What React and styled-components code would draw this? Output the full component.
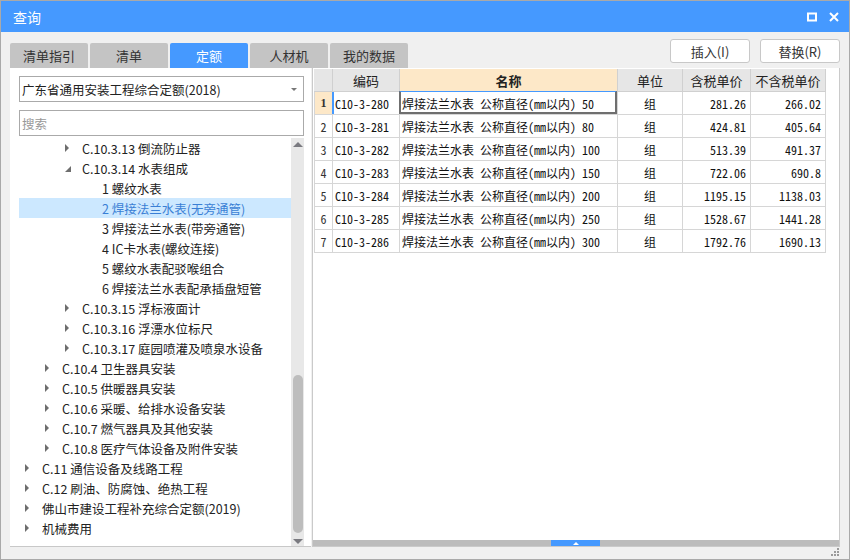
import React from 'react';
import styled, { createGlobalStyle } from 'styled-components';

const GlobalStyle = createGlobalStyle`
  html, body { margin: 0; padding: 0; background: #ffffff; }
  * { box-sizing: border-box; }
`;

const CJK = `"Noto Sans CJK SC", "Noto Sans", sans-serif`;
const MONO = `"Noto Sans Mono CJK SC", "Noto Sans CJK SC", monospace`;

const tree = [
  { level: 2, arrow: 'closed', text: 'C.10.3.13 倒流防止器' },
  { level: 2, arrow: 'open', text: 'C.10.3.14 水表组成' },
  { level: 3, text: '1 螺纹水表' },
  { level: 3, text: '2 焊接法兰水表(无旁通管)', selected: true },
  { level: 3, text: '3 焊接法兰水表(带旁通管)' },
  { level: 3, text: '4 IC卡水表(螺纹连接)' },
  { level: 3, text: '5 螺纹水表配驳喉组合' },
  { level: 3, text: '6 焊接法兰水表配承插盘短管' },
  { level: 2, arrow: 'closed', text: 'C.10.3.15 浮标液面计' },
  { level: 2, arrow: 'closed', text: 'C.10.3.16 浮漂水位标尺' },
  { level: 2, arrow: 'closed', text: 'C.10.3.17 庭园喷灌及喷泉水设备' },
  { level: 1, arrow: 'closed', text: 'C.10.4 卫生器具安装' },
  { level: 1, arrow: 'closed', text: 'C.10.5 供暖器具安装' },
  { level: 1, arrow: 'closed', text: 'C.10.6 采暖、给排水设备安装' },
  { level: 1, arrow: 'closed', text: 'C.10.7 燃气器具及其他安装' },
  { level: 1, arrow: 'closed', text: 'C.10.8 医疗气体设备及附件安装' },
  { level: 0, arrow: 'closed', text: 'C.11 通信设备及线路工程' },
  { level: 0, arrow: 'closed', text: 'C.12 刷油、防腐蚀、绝热工程' },
  { level: 0, arrow: 'closed', text: '佛山市建设工程补充综合定额(2019)' },
  { level: 0, arrow: 'closed', text: '机械费用' },
];

const rows = [
  ['C10-3-280', '50', '281.26', '266.02'],
  ['C10-3-281', '80', '424.81', '405.64'],
  ['C10-3-282', '100', '513.39', '491.37'],
  ['C10-3-283', '150', '722.06', '690.8'],
  ['C10-3-284', '200', '1195.15', '1138.03'],
  ['C10-3-285', '250', '1528.67', '1441.28'],
  ['C10-3-286', '300', '1792.76', '1690.13'],
];

const tabs = ['清单指引', '清单', '定额', '人材机', '我的数据'];

const COLS = '19px 67px 218px 65px 68px 75px';

const Window = styled.div`
  width: 850px;
  height: 560px;
  border: 1px solid #a9a9a9;
  background: #f0f0f0;
  display: flex;
  flex-direction: column;
  font-family: ${CJK};
  overflow: hidden;
`;

const TitleBar = styled.div`
  height: 31px;
  background: #4599ff;
  color: #fff;
  display: flex;
  align-items: center;
  padding: 0 10px 0 12px;
  font-size: 14px;
`;

const Title = styled.div`
  flex: 1;
`;

const TitleIcons = styled.div`
  display: flex;
  align-items: center;
  gap: 12px;
`;

const Body = styled.div`
  flex: 1;
  display: flex;
  flex-direction: column;
  padding: 0 9px 0 9px;
`;

const TopRow = styled.div`
  height: 36px;
  display: flex;
  justify-content: space-between;
  padding-top: 7px;
`;

const Tabs = styled.div`
  display: flex;
  align-self: flex-end;
  gap: 2px;
`;

const Tab = styled.div`
  width: 78px;
  height: 25px;
  display: flex;
  align-items: center;
  justify-content: center;
  font-size: 13px;
  border-radius: 2px 2px 0 0;
  background: ${p => (p.$active ? '#4599ff' : '#c4c4c4')};
  color: ${p => (p.$active ? '#fff' : '#333')};
`;

const Buttons = styled.div`
  display: flex;
  gap: 10px;
  align-self: flex-start;
`;

const Button = styled.div`
  width: 80px;
  height: 24px;
  border: 1px solid #c8c8c8;
  border-radius: 3px;
  background: #fff;
  font-size: 13px;
  color: #333;
  display: flex;
  align-items: center;
  justify-content: center;
`;

const Main = styled.div`
  height: 479px;
  display: flex;
  gap: 1px;
`;

const LeftPanel = styled.div`
  width: 301px;
  background: #fff;
  border-bottom: 1px solid #c8c8c8;
  display: flex;
  flex-direction: column;
  padding: 8px 7px 0 9px;
`;

const Field = styled.div`
  height: 26px;
  border: 1px solid #aaa;
  background: #fff;
  display: flex;
  align-items: center;
  padding: 0 6px 0 2px;
  font-size: 12.5px;
  color: ${p => (p.$placeholder ? '#999' : '#222')};
  margin-bottom: ${p => p.$mb || 0}px;
`;

const FieldText = styled.div`
  flex: 1;
`;

const Caret = styled.div`
  width: 0;
  height: 0;
  border-left: 3px solid transparent;
  border-right: 3px solid transparent;
  border-top: 3px solid #777;
`;

const TreeWrap = styled.div`
  flex: 1;
  display: flex;
  margin-top: 2px;
`;

const TreeList = styled.div`
  flex: 1;
  overflow: hidden;
`;

const TreeRow = styled.div`
  height: 20px;
  display: flex;
  align-items: center;
  padding-left: ${p => 6 + p.$level * 20}px;
  font-size: 12.5px;
  background: ${p => (p.$selected ? '#cce8ff' : 'transparent')};
  color: ${p => (p.$selected ? '#3a7fd5' : '#222')};
  white-space: nowrap;
`;

const ArrowSlot = styled.div`
  width: 17px;
  height: 20px;
  display: flex;
  align-items: center;
`;

const ArrowClosed = styled.div`
  width: 0;
  height: 0;
  border-top: 4px solid transparent;
  border-bottom: 4px solid transparent;
  border-left: 4px solid #6e6e6e;
`;

const ArrowOpen = styled.div`
  width: 0;
  height: 0;
  border-left: 6px solid transparent;
  border-bottom: 6px solid #6e6e6e;
  margin-top: 2px;
`;

const VScroll = styled.div`
  width: 13px;
  background: #e8e8e8;
  display: flex;
  flex-direction: column;
  align-items: center;
  padding: 4px 0 2px;
`;

const ScrollArrow = styled.div`
  width: 0;
  height: 0;
  border-left: 5px solid transparent;
  border-right: 5px solid transparent;
  ${p => (p.$down ? 'border-top: 5px solid #7a7a80;' : 'border-bottom: 5px solid #7a7a80;')}
`;

const ScrollTrack = styled.div`
  flex: 1;
  width: 100%;
  display: flex;
  flex-direction: column;
  justify-content: flex-end;
  align-items: center;
  padding: 0 1px 6px;
`;

const ScrollThumb = styled.div`
  width: 10px;
  height: 158px;
  border-radius: 5px;
  background: #bdbdbd;
`;

const RightPanel = styled.div`
  flex: 1;
  background: #fff;
  border: 1px solid #cacaca;
  border-top: none;
  display: flex;
  flex-direction: column;
  padding: 1px 0 0 1px;
`;

const Table = styled.div`
  flex: 1;
`;

const Row = styled.div`
  display: grid;
  grid-template-columns: ${COLS};
  height: 23px;
  width: 513px;
`;

const Cell = styled.div`
  border-right: 1px solid #d6d6d6;
  border-bottom: 1px solid #d6d6d6;
  ${p => p.$first && 'border-left: 1px solid #d6d6d6;'}
  display: flex;
  align-items: center;
  justify-content: ${p => p.$align || 'flex-start'};
  padding: 0 ${p => (p.$align === 'flex-end' ? '4px' : '2px')};
  font-family: ${MONO};
  font-size: 12px;
  color: #111;
  white-space: nowrap;
  position: relative;
`;

const HeadCell = styled.div`
  border-right: 1px solid #d0d0d0;
  border-bottom: 1px solid #d0d0d0;
  background: ${p => (p.$hot ? '#fde8c8' : '#e6e6e6')};
  display: flex;
  align-items: center;
  justify-content: center;
  font-size: 13px;
  font-weight: ${p => (p.$hot ? 'bold' : 'normal')};
  color: #222;
`;

const NumCell = styled(Cell)`
  justify-content: center;
  padding: 0;
  background: ${p => (p.$active ? '#fde8c8' : '#fff')};
  font-family: ${p => (p.$active ? '"Liberation Serif", serif' : MONO)};
  font-weight: ${p => (p.$active ? 'bold' : 'normal')};
  font-size: 12px;
  color: #333;
`;

const Focus = styled.div`
  position: absolute;
  inset: -1px 0 0 -1px;
  border: 2px solid #6f6f6f;
  border-top: 1px solid #4599ff;
  pointer-events: none;
`;

const ActiveMark = styled.div`
  position: absolute;
  left: -1px;
  top: 0;
  bottom: 0;
  width: 2px;
  background: #4599ff;
`;

const HScroll = styled.div`
  height: 6px;
  background: #bcbcbc;
  display: flex;
  margin: 0 0 0 -1px;
  padding-left: 238px;
`;

const HThumb = styled.div`
  width: 49px;
  height: 100%;
  background: #4599ff;
  display: flex;
  justify-content: center;
  align-items: center;
`;

const HThumbMark = styled.div`
  width: 0;
  height: 0;
  border-left: 3px solid transparent;
  border-right: 3px solid transparent;
  border-bottom: 3px solid #fff;
`;

const Footer = styled.div`
  flex: 1;
  display: flex;
  justify-content: flex-end;
  align-items: flex-end;
  padding: 0 0 2px;
`;

export default function App() {
  return (
    <>
      <GlobalStyle />
      <Window>
        <TitleBar>
          <Title>查询</Title>
          <TitleIcons>
            <svg width="10" height="10" viewBox="0 0 10 10">
              <rect x="1" y="1.5" width="8" height="7" fill="none" stroke="#fff" strokeWidth="2" />
            </svg>
            <svg width="10" height="10" viewBox="0 0 10 10">
              <path d="M1 1 L9 9 M9 1 L1 9" stroke="#fff" strokeWidth="2" />
            </svg>
          </TitleIcons>
        </TitleBar>
        <Body>
          <TopRow>
            <Tabs>
              {tabs.map(t => (
                <Tab key={t} $active={t === '定额'}>{t}</Tab>
              ))}
            </Tabs>
            <Buttons>
              <Button>插入(I)</Button>
              <Button>替换(R)</Button>
            </Buttons>
          </TopRow>
          <Main>
            <LeftPanel>
              <Field $mb={8}>
                <FieldText>广东省通用安装工程综合定额(2018)</FieldText>
                <Caret />
              </Field>
              <Field $placeholder>
                <FieldText>搜索</FieldText>
              </Field>
              <TreeWrap>
                <TreeList>
                  {tree.map((n, i) => (
                    <TreeRow key={i} $level={n.level} $selected={n.selected}>
                      <ArrowSlot>
                        {n.arrow === 'closed' && <ArrowClosed />}
                        {n.arrow === 'open' && <ArrowOpen />}
                      </ArrowSlot>
                      {n.text}
                    </TreeRow>
                  ))}
                </TreeList>
                <VScroll>
                  <ScrollArrow />
                  <ScrollTrack>
                    <ScrollThumb />
                  </ScrollTrack>
                  <ScrollArrow $down />
                </VScroll>
              </TreeWrap>
            </LeftPanel>
            <RightPanel>
              <Table>
                <Row>
                  <HeadCell />
                  <HeadCell>编码</HeadCell>
                  <HeadCell $hot>名称</HeadCell>
                  <HeadCell>单位</HeadCell>
                  <HeadCell>含税单价</HeadCell>
                  <HeadCell>不含税单价</HeadCell>
                </Row>
                {rows.map((r, i) => (
                  <Row key={r[0]}>
                    <NumCell $first $active={i === 0}>{i + 1}</NumCell>
                    <Cell>
                      {i === 0 && <ActiveMark />}
                      {r[0]}
                    </Cell>
                    <Cell>
                      {i === 0 && <Focus />}
                      焊接法兰水表 公称直径(mm以内) {r[1]}
                    </Cell>
                    <Cell $align="center">组</Cell>
                    <Cell $align="flex-end">{r[2]}</Cell>
                    <Cell $align="flex-end">{r[3]}</Cell>
                  </Row>
                ))}
              </Table>
              <HScroll>
                <HThumb>
                  <HThumbMark />
                </HThumb>
              </HScroll>
            </RightPanel>
          </Main>
          <Footer>
            <svg width="10" height="10" viewBox="0 0 10 10">
              <rect x="7" y="1" width="2" height="2" fill="#9a9a9a" />
              <rect x="4" y="4" width="2" height="2" fill="#9a9a9a" />
              <rect x="7" y="4" width="2" height="2" fill="#9a9a9a" />
              <rect x="1" y="7" width="2" height="2" fill="#9a9a9a" />
              <rect x="4" y="7" width="2" height="2" fill="#9a9a9a" />
              <rect x="7" y="7" width="2" height="2" fill="#9a9a9a" />
            </svg>
          </Footer>
        </Body>
      </Window>
    </>
  );
}
